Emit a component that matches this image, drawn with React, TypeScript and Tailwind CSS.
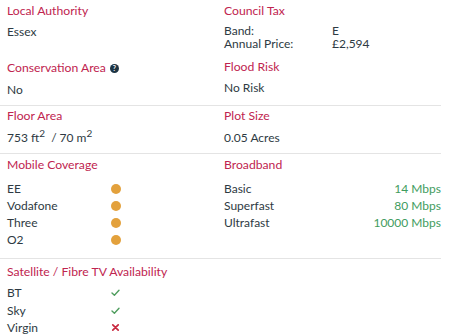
import React from "react";

const MOBILE = ["EE", "Vodafone", "Three", "O2"];

const BROADBAND = [
  { label: "Basic", speed: "14 Mbps" },
  { label: "Superfast", speed: "80 Mbps" },
  { label: "Ultrafast", speed: "10000 Mbps" },
];

const TV = [
  { label: "BT", ok: true },
  { label: "Sky", ok: true },
  { label: "Virgin", ok: false },
];

function Heading({ children }: { children: React.ReactNode }) {
  return <div className="text-[12.2px] leading-[16px] text-[#c0244f]">{children}</div>;
}

function Check() {
  return (
    <svg width="9" height="9" viewBox="0 0 9 9" fill="none">
      <path d="M1 5 L3.4 7.2 L8 2.2" stroke="#4f9d5e" strokeWidth={1.4} strokeLinecap="round" strokeLinejoin="round" />
    </svg>
  );
}

function Cross() {
  return (
    <svg width="9" height="9" viewBox="0 0 9 9" fill="none">
      <path d="M1.8 1.8 L7.2 7.2 M7.2 1.8 L1.8 7.2" stroke="#c8283f" strokeWidth={1.7} strokeLinecap="round" />
    </svg>
  );
}

export default function App() {
  return (
    <div className="w-[450px] h-[336px] bg-white text-[12px] text-[#2e3a43] overflow-hidden" style={{ fontFamily: "Lato, 'Open Sans', sans-serif" }}>
      <div className="w-[441px]">
        {/* Authority / tax / conservation / flood */}
        <div className="grid grid-cols-[224px_217px] border-b border-[#e4e4e4] pb-[8px]">
          <div className="pl-[7px] pt-[3px]">
            <Heading>Local Authority</Heading>
            <div className="mt-[6px] leading-[14px]">Essex</div>
          </div>
          <div className="pt-[3px]">
            <Heading>Council Tax</Heading>
            <div className="mt-[5px] grid grid-cols-[108px_1fr] leading-[13px]">
              <span>Band:</span>
              <span>E</span>
              <span>Annual Price:</span>
              <span>£2,594</span>
            </div>
          </div>
          <div className="pl-[7px] pt-[10px]">
            <Heading>
              <span className="inline-flex items-center gap-[4px]">
                Conservation Area
                <span className="inline-flex w-[9px] h-[9px] rounded-full bg-[#1d3444] text-white text-[7px] font-bold leading-none items-center justify-center">?</span>
              </span>
            </Heading>
            <div className="mt-[7px] leading-[14px]">No</div>
          </div>
          <div className="pt-[9px]">
            <Heading>Flood Risk</Heading>
            <div className="mt-[6px] leading-[14px]">No Risk</div>
          </div>
        </div>

        {/* Floor area / plot size */}
        <div className="grid grid-cols-[224px_217px] border-b border-[#e4e4e4] pt-[2px] pb-[8px]">
          <div className="pl-[7px]">
            <Heading>Floor Area</Heading>
            <div className="mt-[7px] leading-[14px]">
              753 ft<sup className="text-[10px]">2</sup>&nbsp; / 70 m<sup className="text-[10px]">2</sup>
            </div>
          </div>
          <div>
            <Heading>Plot Size</Heading>
            <div className="mt-[7px] leading-[14px]">0.05 Acres</div>
          </div>
        </div>

        {/* Mobile / broadband */}
        <div className="grid grid-cols-[224px_217px] border-b border-[#e4e4e4] pt-[3px] pb-[10px]">
          <div className="pl-[7px]">
            <Heading>Mobile Coverage</Heading>
            <div className="mt-[7px]">
              {MOBILE.map((m) => (
                <div key={m} className="grid grid-cols-[104px_1fr] items-center leading-[17px]">
                  <span>{m}</span>
                  <span className="w-[10px] h-[10px] rounded-full bg-[#e3a13c]" />
                </div>
              ))}
            </div>
          </div>
          <div>
            <Heading>Broadband</Heading>
            <div className="mt-[7px]">
              {BROADBAND.map((b) => (
                <div key={b.label} className="flex justify-between leading-[17px]">
                  <span>{b.label}</span>
                  <span className="text-[#3f9c5e]">{b.speed}</span>
                </div>
              ))}
            </div>
          </div>
        </div>

        {/* TV */}
        <div className="pl-[7px] pt-[5px]">
          <Heading>Satellite / Fibre TV Availability</Heading>
          <div className="mt-[4px]">
            {TV.map((t) => (
              <div key={t.label} className="grid grid-cols-[104px_1fr] items-center leading-[17.5px]">
                <span>{t.label}</span>
                <span className="flex">{t.ok ? <Check /> : <Cross />}</span>
              </div>
            ))}
          </div>
        </div>
      </div>
    </div>
  );
}
